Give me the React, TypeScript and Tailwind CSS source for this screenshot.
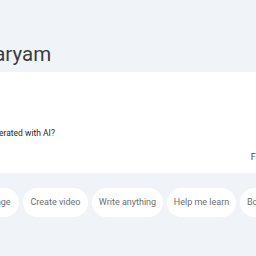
const chips = [
  { label: 'Create image', w: 'w-[70px]' },
  { label: 'Create video', w: 'w-[65px]' },
  { label: 'Write anything', w: 'w-[71px]' },
  { label: 'Help me learn', w: 'w-[69px]' },
  { label: 'Boost my day', w: 'w-[68px]' },
];

export default function App() {
  return (
    <div className="w-[256px] h-[256px] overflow-hidden bg-[#f0f4f9] font-['Roboto',sans-serif]">
      {/* Greeting */}
      <div className="h-[72px] flex items-end pb-[4px] whitespace-nowrap">
        <h1 className="ml-[-80px] text-[20.5px] leading-[28px] text-[#3c3c3c] font-normal">
          Hello, Maryam
        </h1>
      </div>

      {/* Prompt box */}
      <div className="h-[101px] bg-white flex flex-col whitespace-nowrap">
        <p className="mt-[55px] ml-[-64px] text-[8.5px] leading-[12px] text-[#1f1f1f]">
          What can be generated with AI?
        </p>
        <div className="mt-[12px] flex justify-end">
          <span className="mr-[-12px] text-[9px] leading-[12px] text-[#444746]">Fast</span>
        </div>
      </div>

      {/* Suggestion chips */}
      <div className="mt-[15px] flex gap-[4px] ml-[-51px] whitespace-nowrap">
        {chips.map((c) => (
          <div
            key={c.label}
            className={`${c.w} shrink-0 h-[29px] rounded-full bg-white flex items-center justify-center text-[9px] text-[#6b6f73]`}
          >
            {c.label}
          </div>
        ))}
      </div>
    </div>
  );
}
